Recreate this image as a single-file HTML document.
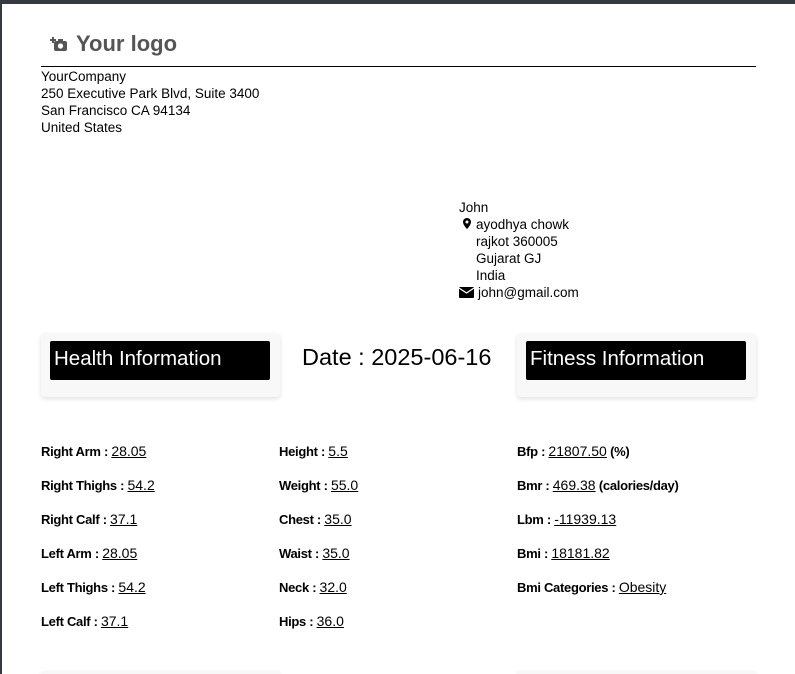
<!DOCTYPE html>
<html><head><meta charset="utf-8"><style>
*{margin:0;padding:0;box-sizing:border-box}
html,body{width:795px;height:674px;overflow:hidden;background:#fff;font-family:"Liberation Sans",sans-serif;color:#000;position:relative}
.top{position:absolute;left:0;top:0;width:795px;height:4px;background:#343a40}
.side{position:absolute;left:0;top:0;width:2px;height:674px;background:#343a40}
.a{position:absolute;white-space:nowrap}
.logo{left:50px;top:31px;font-size:22px;font-weight:bold;color:#555;display:flex;align-items:center;gap:8px}
.hr{position:absolute;left:41px;top:66px;width:715px;height:1px;background:#000}
.addr{left:41px;top:68px;font-size:13.5px;line-height:17px}
.cust{left:459px;top:199px;font-size:13.5px;line-height:17px}
.card{position:absolute;top:333px;width:239px;height:64px;background:#f8f8f8;border-radius:4px;box-shadow:0 2px 5px rgba(0,0,0,.12)}
.card div{position:absolute;left:9px;top:8px;width:220px;height:39px;background:#000;color:#fff;font-size:20.5px;border-radius:2px;padding:6px 0 0 4px}
.date{left:302px;top:344px;font-size:23.5px}
.r{position:absolute;font-size:13px;font-weight:bold;letter-spacing:-0.3px}
.r u{font-weight:normal;font-size:14px;letter-spacing:0}
</style></head><body>
<div class="top"></div><div class="side"></div>
<div class="a logo"><svg width="18" height="16" viewBox="0 0 18 16"><path d="M3 1v6M0 4h6" stroke="#555" stroke-width="2"/><rect x="4" y="5" width="13" height="10" rx="2" fill="#555"/><rect x="8" y="3" width="5" height="3" fill="#555"/><circle cx="10.5" cy="10" r="2.6" fill="#fff"/></svg>Your logo</div>
<div class="hr"></div>
<div class="a addr">YourCompany<br>250 Executive Park Blvd, Suite 3400<br>San Francisco CA 94134<br>United States</div>
<div class="a cust">John<br><span style="display:inline-block;width:17px;padding-left:4px"><svg width="8" height="11" viewBox="0 0 8 11"><path d="M4 0a4 4 0 0 0-4 4c0 3 4 7 4 7s4-4 4-7a4 4 0 0 0-4-4z" fill="#000"/><circle cx="4" cy="4" r="1.5" fill="#fff"/></svg></span>ayodhya chowk<br><span style="padding-left:17px">rajkot 360005</span><br><span style="padding-left:17px">Gujarat GJ</span><br><span style="padding-left:17px">India</span><br><span style="display:inline-block;width:19px;vertical-align:-1px"><svg width="15" height="11" viewBox="0 0 15 11"><rect width="15" height="11" rx="1" fill="#000"/><path d="M0 1l7.5 5L15 1" stroke="#fff" stroke-width="1.3" fill="none"/></svg></span>john@gmail.com</div>
<div class="card" style="left:41px"><div>Health Information</div></div>
<div class="a date">Date : 2025-06-16</div>
<div class="card" style="left:517px"><div>Fitness Information</div></div>
<div class="r" style="left:41px;top:443px">Right Arm : <u>28.05</u></div>
<div class="r" style="left:41px;top:477px">Right Thighs : <u>54.2</u></div>
<div class="r" style="left:41px;top:511px">Right Calf : <u>37.1</u></div>
<div class="r" style="left:41px;top:545px">Left Arm : <u>28.05</u></div>
<div class="r" style="left:41px;top:579px">Left Thighs : <u>54.2</u></div>
<div class="r" style="left:41px;top:613px">Left Calf : <u>37.1</u></div>
<div class="r" style="left:279px;top:443px">Height : <u>5.5</u></div>
<div class="r" style="left:279px;top:477px">Weight : <u>55.0</u></div>
<div class="r" style="left:279px;top:511px">Chest : <u>35.0</u></div>
<div class="r" style="left:279px;top:545px">Waist : <u>35.0</u></div>
<div class="r" style="left:279px;top:579px">Neck : <u>32.0</u></div>
<div class="r" style="left:279px;top:613px">Hips : <u>36.0</u></div>
<div class="r" style="left:517px;top:443px">Bfp : <u>21807.50</u> (%)</div>
<div class="r" style="left:517px;top:477px">Bmr : <u>469.38</u> (calories/day)</div>
<div class="r" style="left:517px;top:511px">Lbm : <u>-11939.13</u></div>
<div class="r" style="left:517px;top:545px">Bmi : <u>18181.82</u></div>
<div class="r" style="left:517px;top:579px">Bmi Categories : <u>Obesity</u></div>
<div class="card" style="left:41px;top:671px;height:3px"></div>
<div class="card" style="left:517px;top:671px;height:3px"></div>
</body></html>
